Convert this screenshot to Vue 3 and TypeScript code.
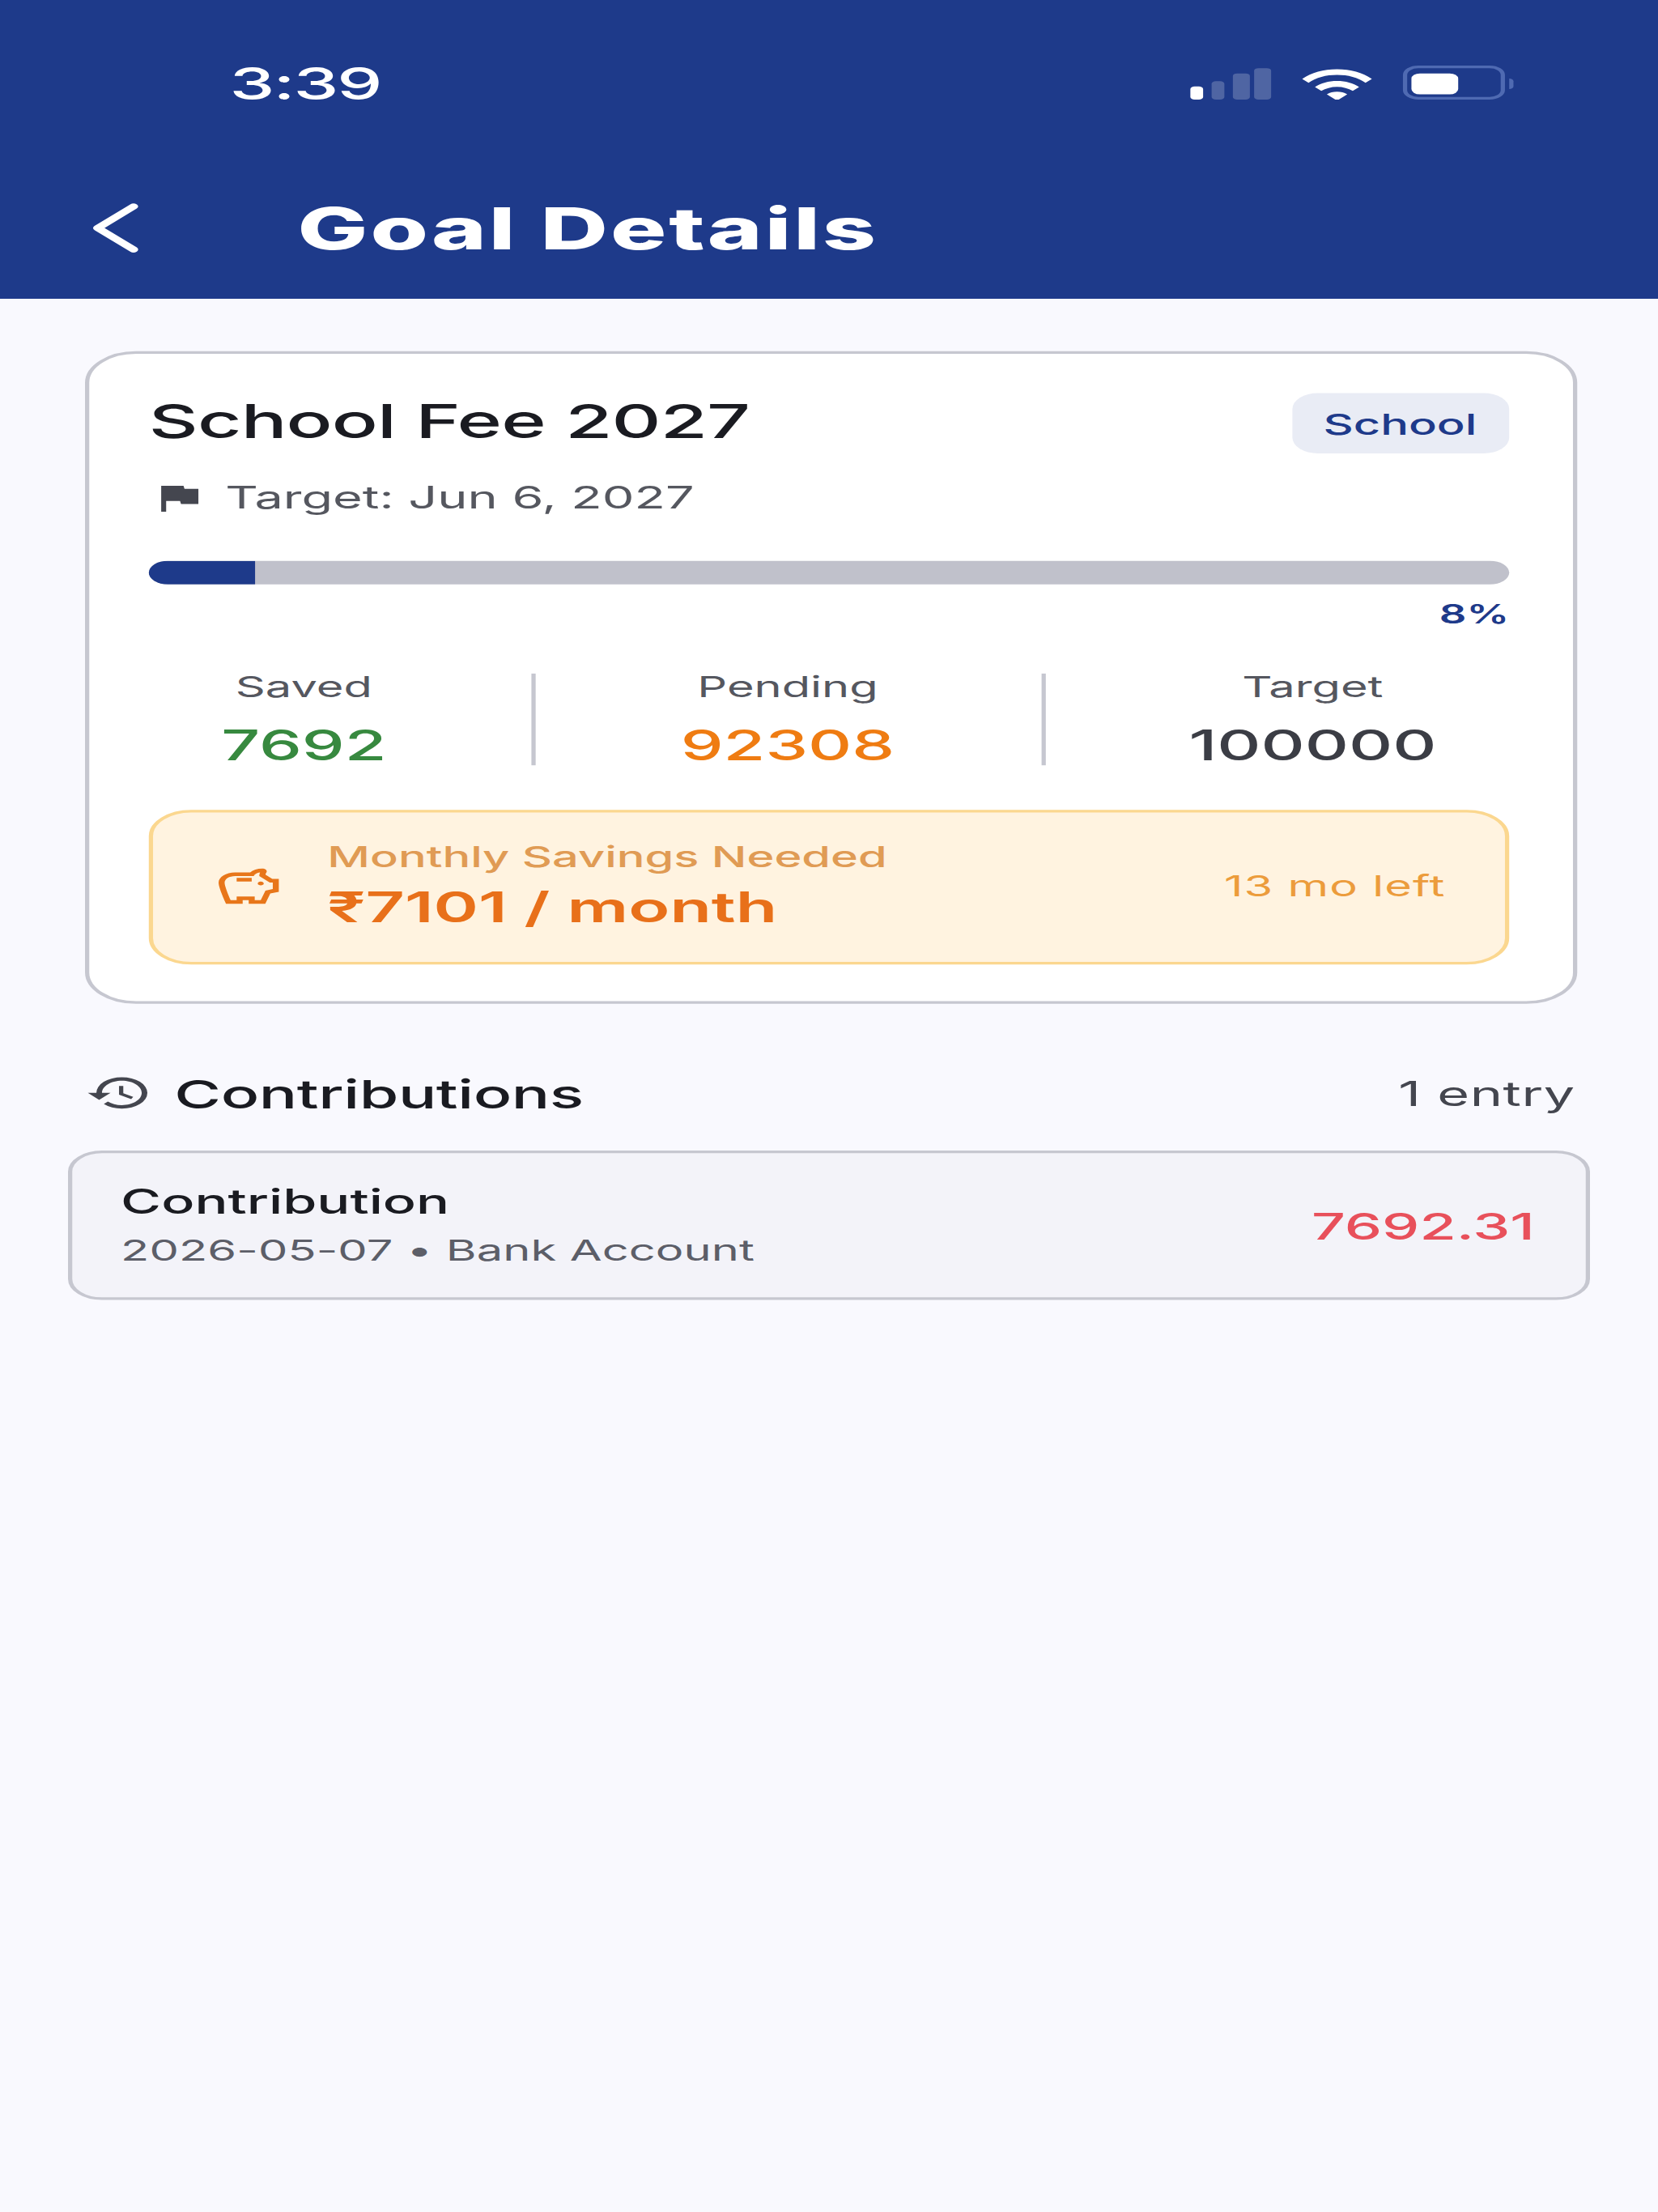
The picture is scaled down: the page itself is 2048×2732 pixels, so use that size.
<script setup lang="ts">
import { computed } from 'vue'

interface Stat {
  label: string
  value: string
  tone: string
}

const goal = {
  name: 'School Fee 2027',
  category: 'School',
  targetDate: 'Jun 6, 2027',
  progress: 7.75,
  percentLabel: '8%'
}

const stats: Stat[] = [
  { label: 'Saved', value: '7692', tone: 'green' },
  { label: 'Pending', value: '92308', tone: 'orange' },
  { label: 'Target', value: '100000', tone: 'dark' }
]

const signalBars = [4.6, 6.8, 9.6, 12.4]

const fillWidth = computed(() => `${goal.progress}%`)
</script>

<template>
  <div class="page">
    <div class="screen">
      <header class="top">
        <div class="status">
          <span class="status__time">3:39</span>
          <div class="status__icons">
            <div class="signal">
              <span
                v-for="(h, i) in signalBars"
                :key="i"
                class="signal__bar"
                :class="{ 'signal__bar--on': i === 0 }"
                :style="{ height: h + 'px' }"
              />
            </div>
            <svg class="wifi" viewBox="0 0 17 12.5" width="17" height="12.5">
              <path d="M0.3 4.1C2.5 1.6 5.3 0.4 8.5 0.4s6 1.2 8.2 3.7l-1.5 1.5C13.4 3.6 11.1 2.6 8.5 2.6S3.6 3.6 1.8 5.6z" fill="#fff" />
              <path d="M3.3 7.2C4.7 5.7 6.5 4.9 8.5 4.9s3.8 0.8 5.2 2.3l-1.5 1.5C11.2 7.7 9.9 7.1 8.5 7.1S5.8 7.7 4.8 8.7z" fill="#fff" />
              <path d="M6.1 10C6.8 9.3 7.6 9 8.5 9s1.7 0.3 2.4 1L8.5 12.4z" fill="#fff" />
            </svg>
            <div class="battery">
              <div class="battery__body"><span class="battery__level" /></div>
              <span class="battery__cap" />
            </div>
          </div>
        </div>
        <div class="nav">
          <svg class="nav__back" viewBox="0 0 12 20" width="12" height="20">
            <path d="M10.4 1.8L2 10l8.4 8.2" fill="none" stroke="#fff" stroke-width="2.2" stroke-linecap="round" stroke-linejoin="round" />
          </svg>
          <h1 class="nav__title">Goal Details</h1>
        </div>
      </header>

      <section class="card">
        <div class="card__head">
          <h2 class="card__name">{{ goal.name }}</h2>
          <span class="chip">{{ goal.category }}</span>
        </div>
        <div class="card__date">
          <svg viewBox="0 0 24 24" width="14" height="14">
            <path d="M14.4 6L14 4H5v17h2v-7h5.6l.4 2h7V6z" fill="#44464f" />
          </svg>
          <span>Target: {{ goal.targetDate }}</span>
        </div>
        <div class="bar">
          <div class="bar__fill" :style="{ width: fillWidth }" />
        </div>
        <div class="percent">{{ goal.percentLabel }}</div>

        <div class="stats">
          <template v-for="(stat, i) in stats" :key="stat.label">
            <span v-if="i > 0" class="stats__divider" />
            <div class="stat">
              <span class="stat__label">{{ stat.label }}</span>
              <span class="stat__value" :class="`stat__value--${stat.tone}`">{{ stat.value }}</span>
            </div>
          </template>
        </div>

        <div class="savings">
          <svg class="savings__icon" viewBox="0 0 24 24" width="17" height="17">
            <path
              d="M15 10C15 9.45 15.45 9 16 9C16.55 9 17 9.45 17 10S16.55 11 16 11 15 10.55 15 10M8 9H13V7H8V9M22 7.5V14.47L19.18 15.41L17.5 21H12V19H10V21H4.5C4.5 21 2 12.54 2 9.5S4.46 4 7.5 4H12.5C13.41 2.79 14.86 2 16.5 2C17.33 2 18 2.67 18 3.5C18 3.71 17.96 3.9 17.88 4.08C17.74 4.42 17.62 4.8 17.56 5.21L19.83 7.5H22M20 9.5H19L15.5 6C15.5 5.35 15.59 4.71 15.76 4.09C14.79 4.34 14 5.06 13.67 6H7.5C5.57 6 4 7.57 4 9.5C4 11.38 5.22 16.15 6 19H8V17H14V19H16L17.56 13.85L20 13.03V9.5Z"
              fill="#e8761a"
            />
          </svg>
          <div class="savings__text">
            <span class="savings__label">Monthly Savings Needed</span>
            <span class="savings__value">₹7101 / month</span>
          </div>
          <span class="savings__left">13 mo left</span>
        </div>
      </section>

      <div class="section-head">
        <div class="section-head__title">
          <svg viewBox="0 0 24 24" width="16" height="16">
            <path
              d="M13 3a9 9 0 0 0-9 9H1l3.89 3.89.07.14L9 12H6c0-3.87 3.13-7 7-7s7 3.13 7 7-3.13 7-7 7c-1.93 0-3.68-.79-4.94-2.06l-1.42 1.42A8.954 8.954 0 0 0 13 21a9 9 0 0 0 0-18zm-1 5v5l4.28 2.54.72-1.21-3.5-2.08V8H12z"
              fill="#44464f"
            />
          </svg>
          <h3>Contributions</h3>
        </div>
        <span class="section-head__count">1 entry</span>
      </div>

      <article class="entry">
        <div class="entry__text">
          <span class="entry__title">Contribution</span>
          <span class="entry__meta">2026-05-07 • Bank Account</span>
        </div>
        <span class="entry__amount">7692.31</span>
      </article>
    </div>
  </div>
</template>

<style scoped>
.page {
  width: 2048px;
  height: 2732px;
  background: #f9f9fe;
  overflow: hidden;
}

/* the capture is a 390x844 phone frame stretched to the 2048x2732 window */
.screen {
  width: 390px;
  height: 844px;
  font-family: Inter, 'Noto Sans', sans-serif;
  color: #1a1b21;
  transform-origin: 0 0;
  transform: scale(5.2513, 3.237);
}

.top {
  height: 114px;
  background: #1e3a8a;
  color: #fff;
}

.status {
  display: flex;
  align-items: center;
  justify-content: space-between;
  height: 64px;
  padding: 0 34px 0 54px;
}

.status__time {
  font-size: 17px;
  font-weight: 500;
  letter-spacing: -0.4px;
}

.status__icons {
  display: flex;
  align-items: flex-end;
  gap: 7px;
  height: 13px;
  margin-bottom: 1px;
}

.signal {
  display: flex;
  align-items: flex-end;
  gap: 1.8px;
}

.signal__bar {
  width: 3.4px;
  border-radius: 1px;
  background: rgba(255, 255, 255, 0.22);
}

.signal__bar--on {
  background: #fff;
}

.battery {
  display: flex;
  align-items: center;
  gap: 0.6px;
}

.battery__body {
  box-sizing: border-box;
  width: 24.4px;
  height: 12.6px;
  padding: 1.4px;
  border: 1px solid #4f6ab2;
  border-radius: 3.6px;
}

.battery__level {
  display: block;
  width: 11px;
  height: 100%;
  border-radius: 2px;
  background: #fff;
}

.battery__cap {
  width: 1.2px;
  height: 3.6px;
  border-radius: 0 2px 2px 0;
  background: #4f6ab2;
}

.nav {
  display: flex;
  align-items: center;
  gap: 37px;
  height: 46px;
  padding-left: 21px;
}

.nav__back {
  flex: none;
}

.nav__title {
  margin: -0.6px 0 0;
  font-size: 22px;
  font-weight: 800;
  line-height: 26px;
  letter-spacing: 0.55px;
}

.card {
  box-sizing: border-box;
  height: 249px;
  margin: 19.5px 19.5px 0;
  padding: 15.5px 14.5px 14px;
  background: #fff;
  border: 1px solid #c6c7d0;
  border-radius: 12px;
}

.card__head {
  display: flex;
  align-items: center;
  justify-content: space-between;
}

.card__name {
  margin: 0;
  padding-bottom: 2px;
  font-size: 18px;
  font-weight: 500;
  line-height: 21px;
  letter-spacing: -0.17px;
}

.chip {
  padding: 0 7.6px;
  height: 23px;
  line-height: 24px;
  font-size: 11px;
  font-weight: 500;
  color: #1e3a8a;
  background: #e9ecf5;
  border-radius: 6px;
}

.card__date {
  display: flex;
  align-items: center;
  gap: 4px;
  margin-top: 8.5px;
  height: 16px;
  font-size: 12px;
  color: #55575f;
}

.bar {
  height: 9.5px;
  margin-top: 16px;
  border-radius: 5px;
  background: #c0c1cb;
  overflow: hidden;
}

.bar__fill {
  height: 100%;
  background: #1e3a8a;
}

.percent {
  margin-top: 4.4px;
  height: 14px;
  line-height: 14px;
  text-align: right;
  font-size: 10px;
  font-weight: 600;
  color: #1e3a8a;
}

.stats {
  display: flex;
  align-items: center;
  justify-content: space-around;
  margin-top: 12.2px;
}

.stats__divider {
  width: 1px;
  height: 35px;
  background: #c6c7d0;
}

.stat {
  display: flex;
  flex-direction: column;
  align-items: center;
  gap: 3px;
}

.stat__label {
  font-size: 11px;
  line-height: 16px;
  color: #55575f;
}

.stat__value {
  font-size: 16px;
  font-weight: 500;
  line-height: 22px;
}

.stat__value--green {
  color: #37893f;
}

.stat__value--orange {
  color: #ef7c12;
}

.stat__value--dark {
  color: #3b3d45;
}

.savings {
  box-sizing: border-box;
  display: flex;
  align-items: center;
  height: 59px;
  margin-top: 14px;
  padding: 0 14px;
  background: #fff3e0;
  border: 1px solid #fbd78f;
  border-radius: 10px;
}

.savings__icon {
  flex: none;
  margin-right: 10px;
}

.savings__text {
  display: flex;
  flex-direction: column;
  flex: 1;
}

.savings__label {
  font-size: 11px;
  line-height: 15px;
  font-weight: 500;
  color: #e09b54;
}

.savings__value {
  font-size: 16px;
  line-height: 22px;
  font-weight: 600;
  color: #e8701a;
}

.savings__left {
  font-size: 11px;
  letter-spacing: 0.2px;
  color: #ec9c3c;
}

.section-head {
  display: flex;
  align-items: center;
  justify-content: space-between;
  height: 20px;
  margin: 24.5px 19.5px 0;
}

.section-head__title {
  display: flex;
  align-items: center;
  gap: 5.5px;
}

.section-head__title h3 {
  margin: 0;
  font-size: 15px;
  font-weight: 500;
  letter-spacing: -0.08px;
}

.section-head__count {
  font-size: 13px;
  letter-spacing: 0.1px;
  color: #44464f;
}

.entry {
  box-sizing: border-box;
  display: flex;
  align-items: center;
  justify-content: space-between;
  height: 57px;
  margin: 11.5px 15.6px 0;
  padding: 0 12.4px 0 11.8px;
  background: #f3f3f9;
  border: 1px solid #c6c7d0;
  border-radius: 8px;
}

.entry__text {
  display: flex;
  flex-direction: column;
  gap: 2.4px;
}

.entry__title {
  font-size: 13px;
  font-weight: 500;
  line-height: 18px;
}

.entry__meta {
  font-size: 11px;
  line-height: 16px;
  letter-spacing: 0.02px;
  color: #5c5e68;
}

.entry__amount {
  font-size: 14px;
  font-weight: 500;
  color: #e8505b;
}
</style>
